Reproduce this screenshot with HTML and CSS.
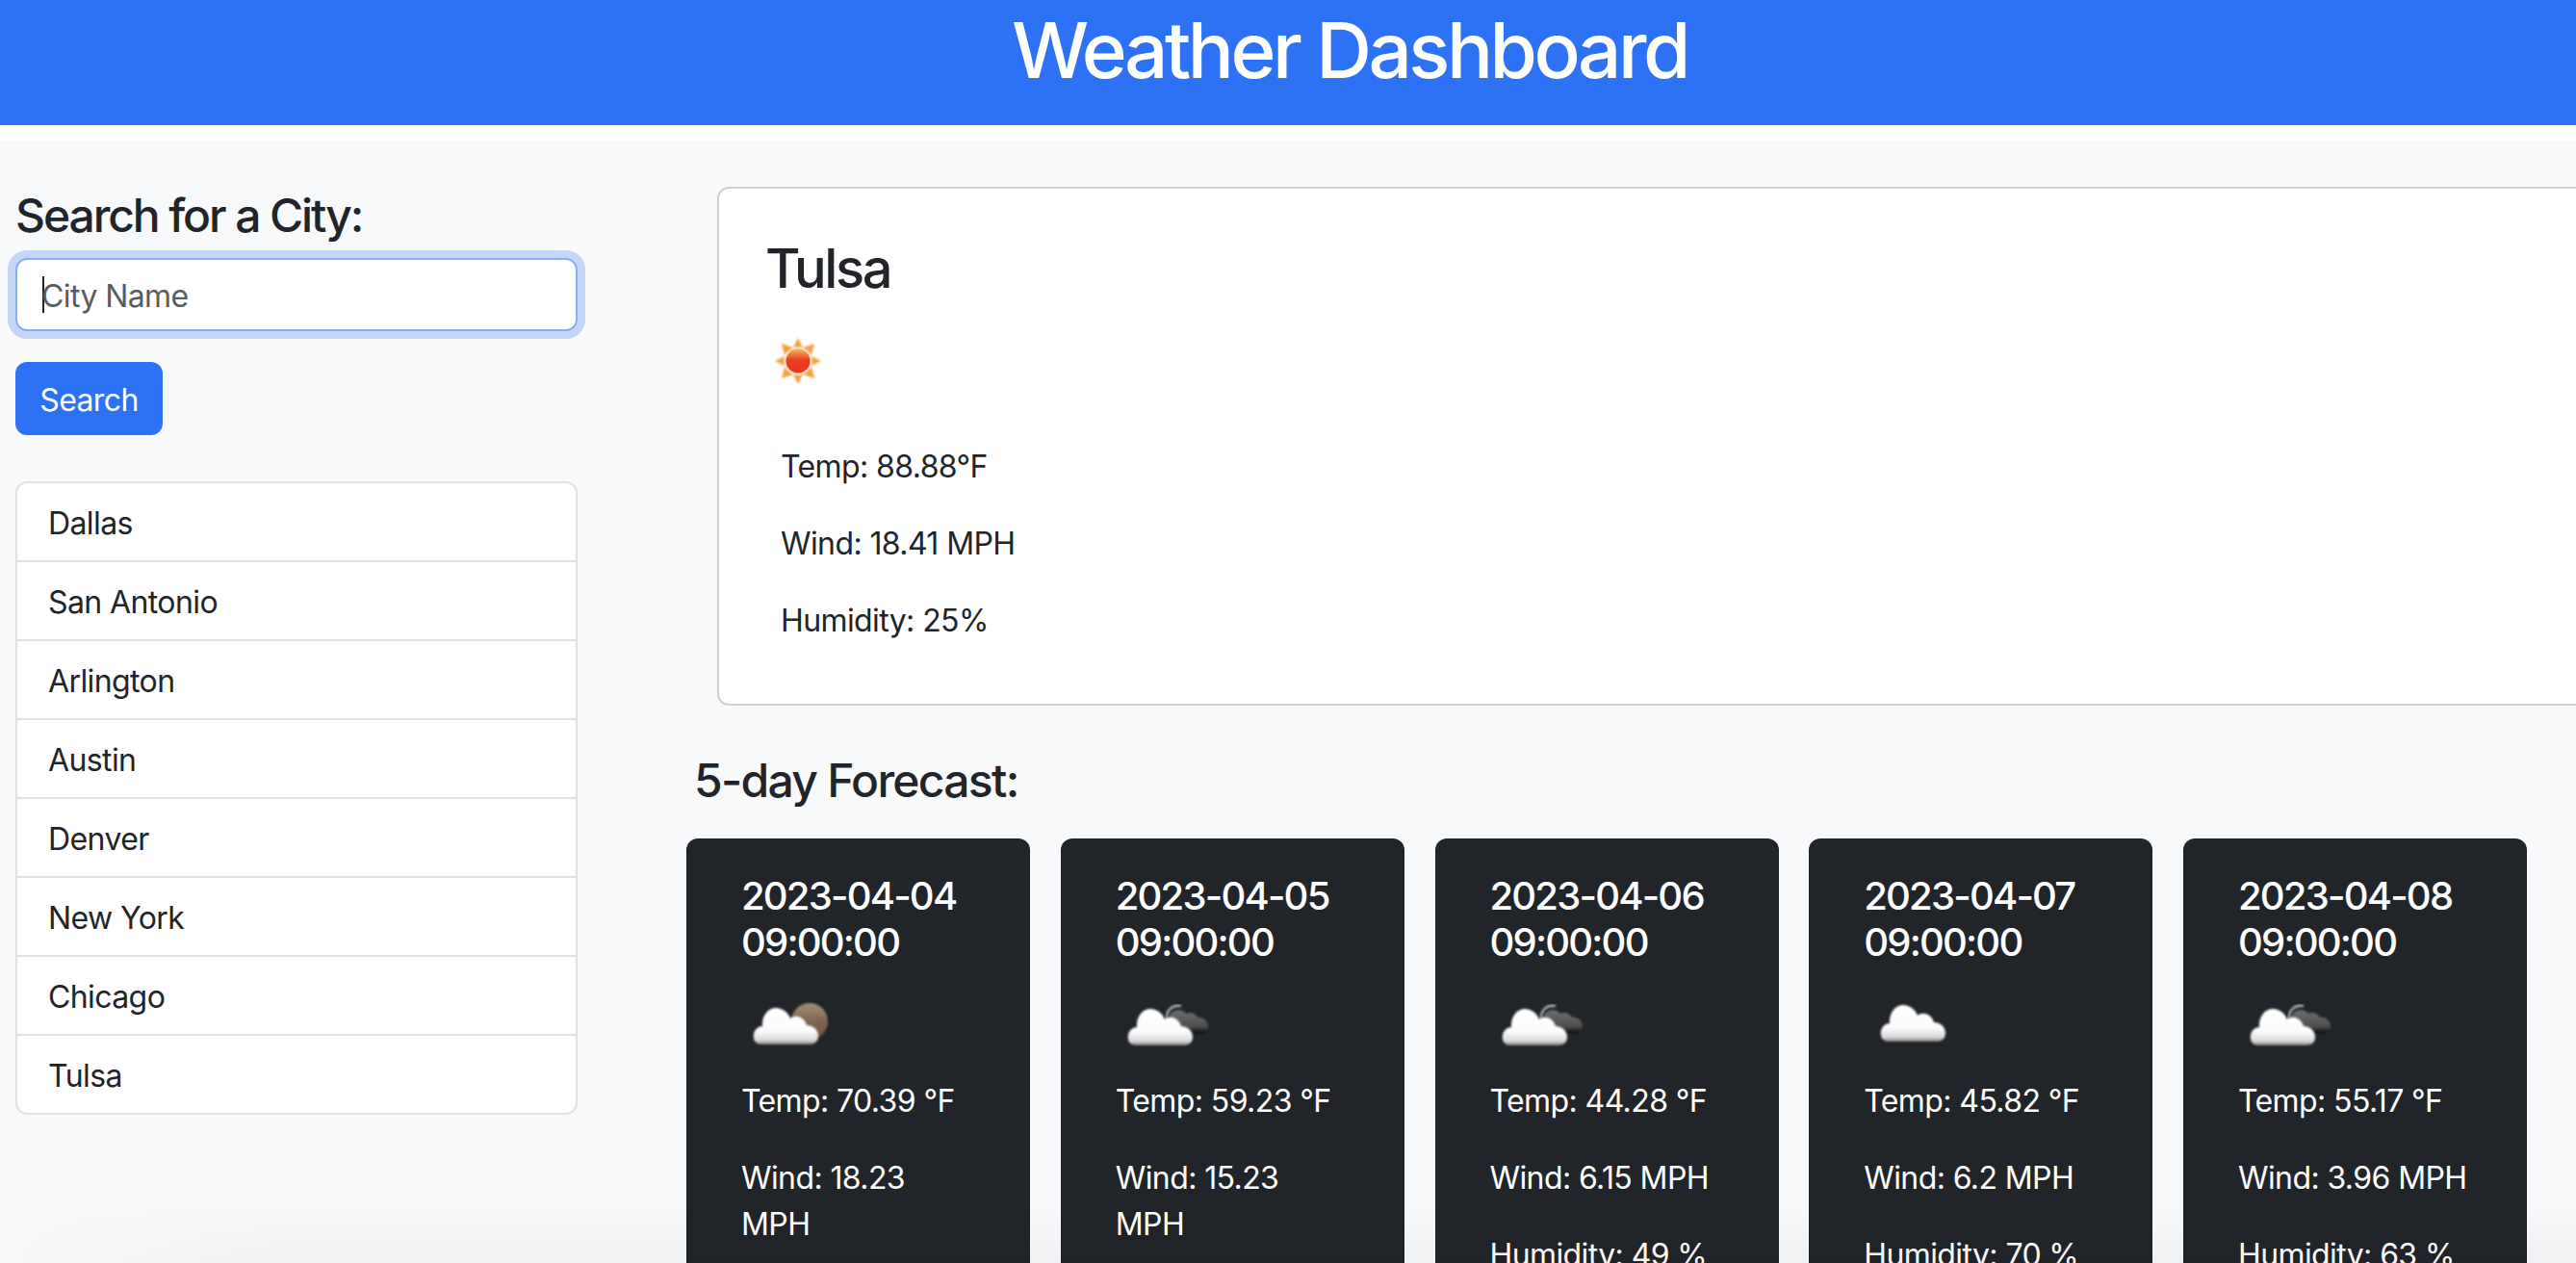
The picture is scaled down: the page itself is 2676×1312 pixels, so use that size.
FILE: index.html
```html
<!DOCTYPE html>
<html>
<head>
	<title>Weather Dashboard</title>
	<link rel="stylesheet" href="styles.css">
</head>
<body>
	<svg class="icon-defs" aria-hidden="true">
		<defs>
			<linearGradient id="cloudFill" x1="0" y1="0" x2="0" y2="1">
				<stop offset="0" stop-color="#ffffff"/>
				<stop offset="0.62" stop-color="#fbfbfb"/>
				<stop offset="0.88" stop-color="#d8d8d8"/>
				<stop offset="1" stop-color="#7d7d7d"/>
			</linearGradient>
			<linearGradient id="moonFill" x1="0" y1="0" x2="0" y2="1">
				<stop offset="0" stop-color="#a58f78"/>
				<stop offset="0.5" stop-color="#7d6650"/>
				<stop offset="1" stop-color="#6b5744"/>
			</linearGradient>
			<linearGradient id="darkFill" x1="0" y1="0" x2="0" y2="1">
				<stop offset="0" stop-color="#6e6e6e"/>
				<stop offset="0.72" stop-color="#4e4e4e"/>
				<stop offset="1" stop-color="#0c0c0c"/>
			</linearGradient>
			<linearGradient id="sunFill" x1="0" y1="0" x2="0" y2="1">
				<stop offset="0" stop-color="#f6b94e"/>
				<stop offset="0.45" stop-color="#ee3d24"/>
				<stop offset="1" stop-color="#ea3524"/>
			</linearGradient>
			<filter id="soft" x="-10%" y="-10%" width="120%" height="120%">
				<feGaussianBlur stdDeviation="0.8"/>
			</filter>
			<symbol id="cloud" viewBox="0 0 100 100">
				<path filter="url(#soft)" fill="url(#cloudFill)" d="M18 72C11 72 9 66 10 61C11 56 15 53 19 53C18 42 25 34 33 34C40 34 46 39 48 45C52 41 62 42 65 52C72 52 77 57 77 63C77 69 73 72 68 72Z"/>
			</symbol>
			<symbol id="moon" viewBox="0 0 100 100">
				<circle filter="url(#soft)" cx="68" cy="48" r="19" fill="url(#moonFill)"/>
			</symbol>
			<symbol id="darkcloud" viewBox="0 0 100 100">
				<path filter="url(#soft)" fill="none" stroke="#a8a8a8" stroke-width="2.5" d="M50 46C49 37 56 30 65 32"/>
				<path filter="url(#soft)" fill="url(#darkFill)" d="M58 60C50 56 50 45 53 41C57 35 66 35 70 40C73 38 80 39 82 44C88 43 93 48 93 53C93 58 90 60 86 60Z"/>
			</symbol>
		</defs>
	</svg>

	<div class="top">
		<header class="banner">
			<h1 class="banner-title">Weather Dashboard</h1>
		</header>
	</div>

	<div class="layout">
		<aside class="sidebar">
			<h4 class="side-title">Search for a City:</h4>
			<div class="city-input">
				<span class="caret"></span>
				<input class="city-field" type="text" placeholder="City Name">
			</div>
			<button class="search-btn">Search</button>
			<ul class="city-list">
				<li>Dallas</li>
				<li>San Antonio</li>
				<li>Arlington</li>
				<li>Austin</li>
				<li>Denver</li>
				<li>New York</li>
				<li>Chicago</li>
				<li>Tulsa</li>
			</ul>
		</aside>

		<main class="content">
			<section class="today">
				<h3 class="today-city">Tulsa</h3>
				<svg class="sun" viewBox="0 0 64 64">
					<g filter="url(#soft)" fill="#f5a03c">
						<polygon points="32,8 27,18 37,18"/>
						<polygon points="32,56 27,46 37,46"/>
						<polygon points="8,32 18,27 18,37"/>
						<polygon points="56,32 46,27 46,37"/>
						<polygon points="15,14 27,18 18,26"/>
						<polygon points="49,14 37,18 46,26"/>
						<polygon points="15,50 27,46 18,38"/>
						<polygon points="49,50 37,46 46,38"/>
					</g>
					<circle cx="32" cy="32" r="14.5" fill="#f9d7c4" filter="url(#soft)"/>
					<circle cx="32" cy="32" r="12.5" fill="url(#sunFill)"/>
				</svg>
				<div class="today-stats">
					<p>Temp: 88.88°F</p>
					<p>Wind: 18.41 MPH</p>
					<p>Humidity: 25%</p>
				</div>
			</section>

			<h4 class="forecast-title">5-day Forecast:</h4>
			<div class="forecast">
				<article class="day">
					<h5 class="day-date">2023-04-04 09:00:00</h5>
					<svg class="day-icon"><use href="#moon"/><use href="#cloud"/></svg>
					<p>Temp: 70.39 °F</p>
					<p>Wind: 18.23 MPH</p>
				</article>
				<article class="day">
					<h5 class="day-date">2023-04-05 09:00:00</h5>
					<svg class="day-icon"><use href="#darkcloud"/><use href="#cloud" y="1"/></svg>
					<p>Temp: 59.23 °F</p>
					<p>Wind: 15.23 MPH</p>
				</article>
				<article class="day">
					<h5 class="day-date">2023-04-06 09:00:00</h5>
					<svg class="day-icon"><use href="#darkcloud"/><use href="#cloud" y="1"/></svg>
					<p>Temp: 44.28 °F</p>
					<p>Wind: 6.15 MPH</p>
					<p>Humidity: 49 %</p>
				</article>
				<article class="day">
					<h5 class="day-date">2023-04-07 09:00:00</h5>
					<svg class="day-icon"><use href="#cloud" x="5" y="-3"/></svg>
					<p>Temp: 45.82 °F</p>
					<p>Wind: 6.2 MPH</p>
					<p>Humidity: 70 %</p>
				</article>
				<article class="day">
					<h5 class="day-date">2023-04-08 09:00:00</h5>
					<svg class="day-icon"><use href="#darkcloud"/><use href="#cloud" y="1"/></svg>
					<p>Temp: 55.17 °F</p>
					<p>Wind: 3.96 MPH</p>
					<p>Humidity: 63 %</p>
				</article>
			</div>
		</main>
	</div>
	<div class="dock-shadow"></div>
</body>
</html>
```

FILE: styles.css
```css
html, body {
  height: 100%;
  overflow: hidden;
}

body {
  margin: 0;
  width: 2804px;
  background: #f8f9fa;
  color: #212529;
  font-family: Inter, "Liberation Sans", sans-serif;
  font-size: 32px;
  line-height: 48px;
  letter-spacing: -0.6px;
}

h1, h3, h4, h5, p, ul {
  margin: 0;
  padding: 0;
}

.icon-defs {
  position: absolute;
  width: 0;
  height: 0;
}

/* header */
.top {
  background: #fff;
  padding-bottom: 16px;
}

.banner {
  background: #2d72f5;
  height: 130px;
  text-align: center;
}

.banner-title {
  color: #fff;
  font-size: 80px;
  font-weight: 500;
  line-height: 104px;
  letter-spacing: -3.5px;
}

/* left column */
.layout {
  display: flex;
}

.sidebar {
  flex: none;
  width: 584px;
  padding-left: 16px;
}

.side-title {
  padding-top: 7px;
  margin-top: 42px;
  height: 73px;
  font-size: 48px;
  font-weight: 500;
  line-height: 58px;
  letter-spacing: -2.1px;
}

.city-input {
  display: flex;
  align-items: center;
  height: 76px;
  box-sizing: border-box;
  padding-left: 26px;
  background: #fff;
  border: 2px solid #86b0f8;
  border-radius: 12px;
  box-shadow: 0 0 0 8px #c6d6f8;
}

.caret {
  flex: none;
  width: 2px;
  height: 38px;
  background: #212529;
}

.city-field {
  flex: 1;
  min-width: 0;
  margin-left: -3px;
  padding: 3px 0 0;
  border: none;
  outline: none;
  background: transparent;
  font: inherit;
  letter-spacing: inherit;
}

.city-field::placeholder {
  color: #595c5f;
  opacity: 1;
}

.search-btn {
  display: block;
  margin-top: 32px;
  width: 153px;
  height: 76px;
  padding: 3px 0 0;
  border: none;
  border-radius: 12px;
  background: #2d72f5;
  color: #fff;
  font: inherit;
  letter-spacing: inherit;
}

.city-list {
  margin-top: 48px;
  list-style: none;
  background: #fff;
  border: 2px solid #dee2e6;
  border-radius: 12px;
}

.city-list li {
  height: 80px;
  padding: 0 32px;
  line-height: 84px;
  border-top: 2px solid #dee2e6;
}

.city-list li:first-child {
  border-top: none;
}

/* right column */
.content {
  flex: none;
  width: 2093px;
  margin-left: 113px;
}

.today {
  margin: 48px 0 0 32px;
  height: 539px;
  box-sizing: border-box;
  padding: 50px 48px 0;
  background: #fff;
  border: 2px solid #cfcfcf;
  border-radius: 12px;
}

.today-city {
  font-size: 56px;
  font-weight: 500;
  line-height: 67px;
  letter-spacing: -2.4px;
}

.sun {
  display: block;
  width: 64px;
  height: 64px;
  margin: 30px 0 0 2px;
}

.today-stats {
  margin: 54px 0 0 16px;
}

.today-stats p + p {
  margin-top: 32px;
}

.forecast-title {
  margin: 49px 0 0 8px;
  font-size: 48px;
  font-weight: 500;
  line-height: 58px;
  letter-spacing: -1.7px;
}

.forecast {
  display: flex;
  gap: 31.75px;
  margin-top: 31px;
}

.day {
  flex: none;
  width: 357px;
  height: 600px;
  box-sizing: border-box;
  padding: 36px 57px 0;
  background: #212529;
  border-radius: 12px;
  color: #fff;
}

.day-date {
  font-size: 40px;
  font-weight: 500;
  line-height: 48px;
  letter-spacing: -1.8px;
}

.day-icon {
  display: block;
  width: 100px;
  height: 100px;
  margin: 10px 0 7px 3px;
}

.day p + p {
  margin-top: 32px;
}

.dock-shadow {
  position: absolute;
  left: 0;
  right: 0;
  bottom: 0;
  height: 60px;
  background: linear-gradient(to bottom, rgba(0, 0, 0, 0), rgba(0, 0, 0, 0.03));
  -webkit-mask-image: linear-gradient(to right, transparent, #000 300px);
  mask-image: linear-gradient(to right, transparent, #000 300px);
  pointer-events: none;
}
```
